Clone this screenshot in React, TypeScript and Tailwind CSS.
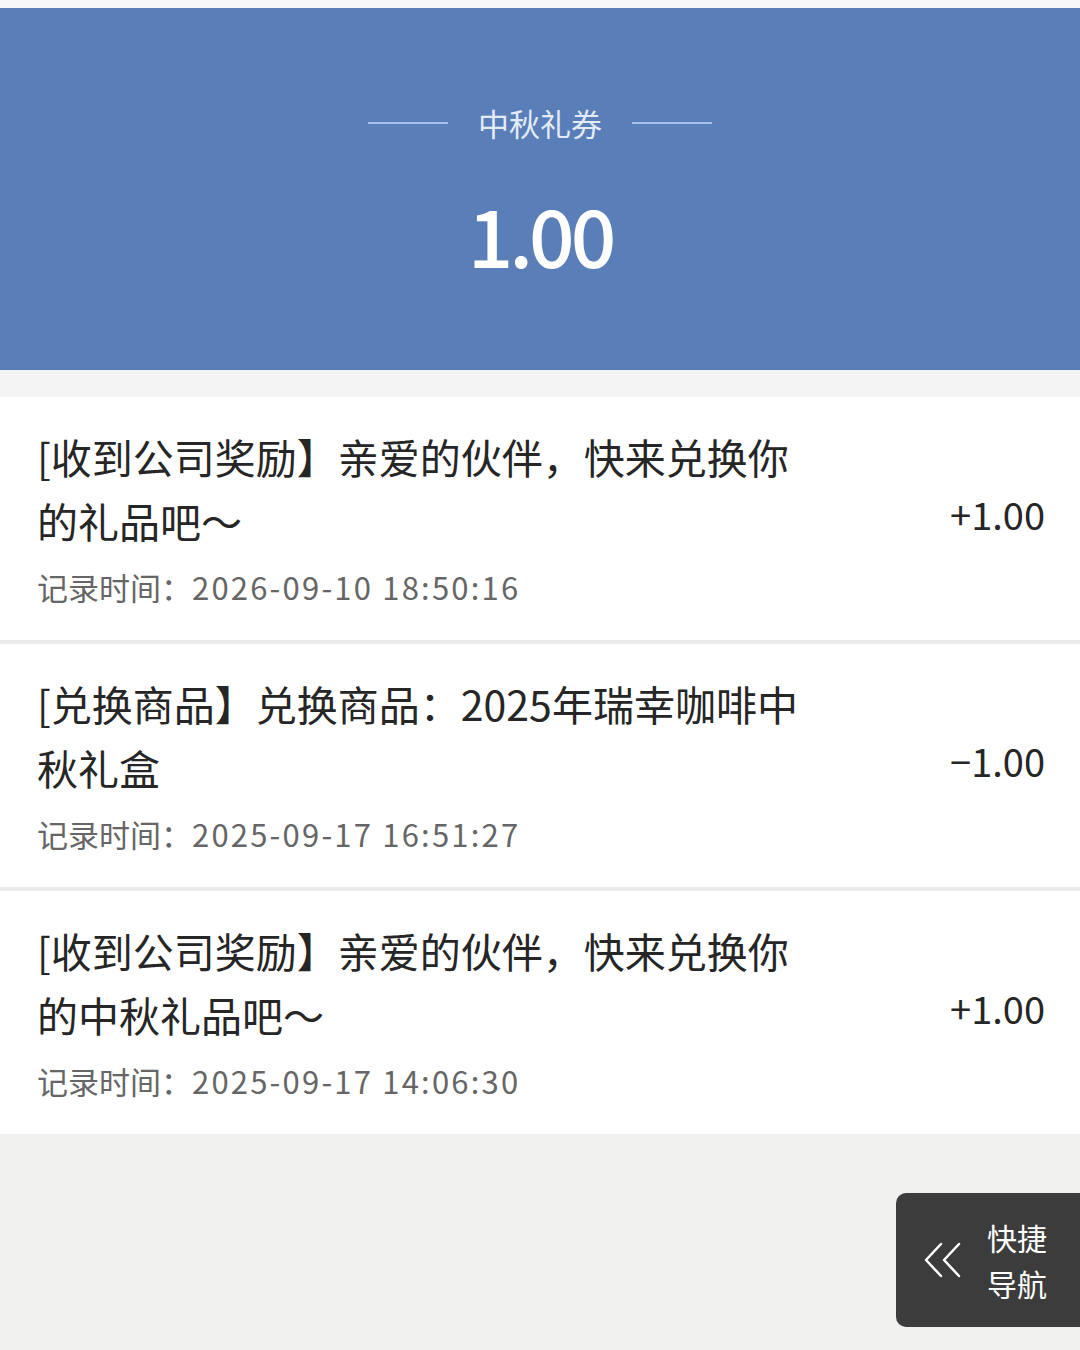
import { ReactNode } from "react";

type Record = {
    title: ReactNode;
    time: string;
    amount: string;
};

const records: Record[] = [
    {
        title: "[收到公司奖励】亲爱的伙伴，快来兑换你的礼品吧～",
        time: "2026-09-10 18:50:16",
        amount: "+1.00",
    },
    {
        title: "[兑换商品】兑换商品：2025年瑞幸咖啡中秋礼盒",
        time: "2025-09-17 16:51:27",
        amount: "−1.00",
    },
    {
        title: "[收到公司奖励】亲爱的伙伴，快来兑换你的中秋礼品吧～",
        time: "2025-09-17 14:06:30",
        amount: "+1.00",
    },
];

const App = () => {
    return (
        <div
            className="relative min-h-[1350px] w-full bg-[#f0f0ee]"
            style={{ fontFamily: '"Noto Sans CJK SC", "Noto Sans", sans-serif' }}
        >
            {/* top strip */}
            <div className="h-[8px] bg-[#f6f7f9]" />

            {/* header */}
            <header className="h-[362px] bg-[#5a7eb8] flex flex-col items-center">
                <div className="mt-[97px] flex items-center gap-[30px]">
                    <span className="block w-[80px] h-[2px] bg-[#a9c1ea]" />
                    <span className="text-[31px] leading-[36px] text-[#e3ebf8]">中秋礼券</span>
                    <span className="block w-[80px] h-[2px] bg-[#a9c1ea]" />
                </div>
                <div className="mt-[52px] text-[80px] leading-[80px] font-medium text-white tracking-[-4px]">
                    1.00
                </div>
            </header>

            <div className="h-[27px] bg-[#f4f4f4]" />

            {/* list */}
            <ul className="flex flex-col gap-[4px] bg-[#ebebeb]">
                {records.map((r, i) => (
                    <li
                        key={i}
                        className="flex items-center justify-between bg-white pl-[37px] pr-[35px] pt-[27px] pb-[29px]"
                    >
                        <div className="w-[770px]">
                            <p className="text-[41px] leading-[64px] text-[#262626]">{r.title}</p>
                            <p className="mt-[11px] text-[31px] leading-[48px] text-[#666]">
                                记录时间：<span className="tracking-[2.2px]">{r.time}</span>
                            </p>
                        </div>
                        <span className="text-[38px] leading-[48px] text-[#262626] mb-[8px]">{r.amount}</span>
                    </li>
                ))}
            </ul>

            {/* quick nav */}
            <button
                type="button"
                className="absolute left-[896px] top-[1193px] w-[184px] h-[134px] rounded-l-[10px] bg-[#3c3c3c] flex items-center pl-[27px] gap-[24px]"
            >
                <svg width="40" height="38" viewBox="0 0 40 38" fill="none" stroke="white" strokeWidth="2.5" strokeLinecap="round" strokeLinejoin="round">
                    <path d="M18 3 L3 19 L18 35" />
                    <path d="M36 3 L21 19 L36 35" />
                </svg>
                <span className="flex flex-col text-white text-[30px] leading-[46px] text-left">
                    <span>快捷</span>
                    <span>导航</span>
                </span>
            </button>
        </div>
    );
};

export default App;
